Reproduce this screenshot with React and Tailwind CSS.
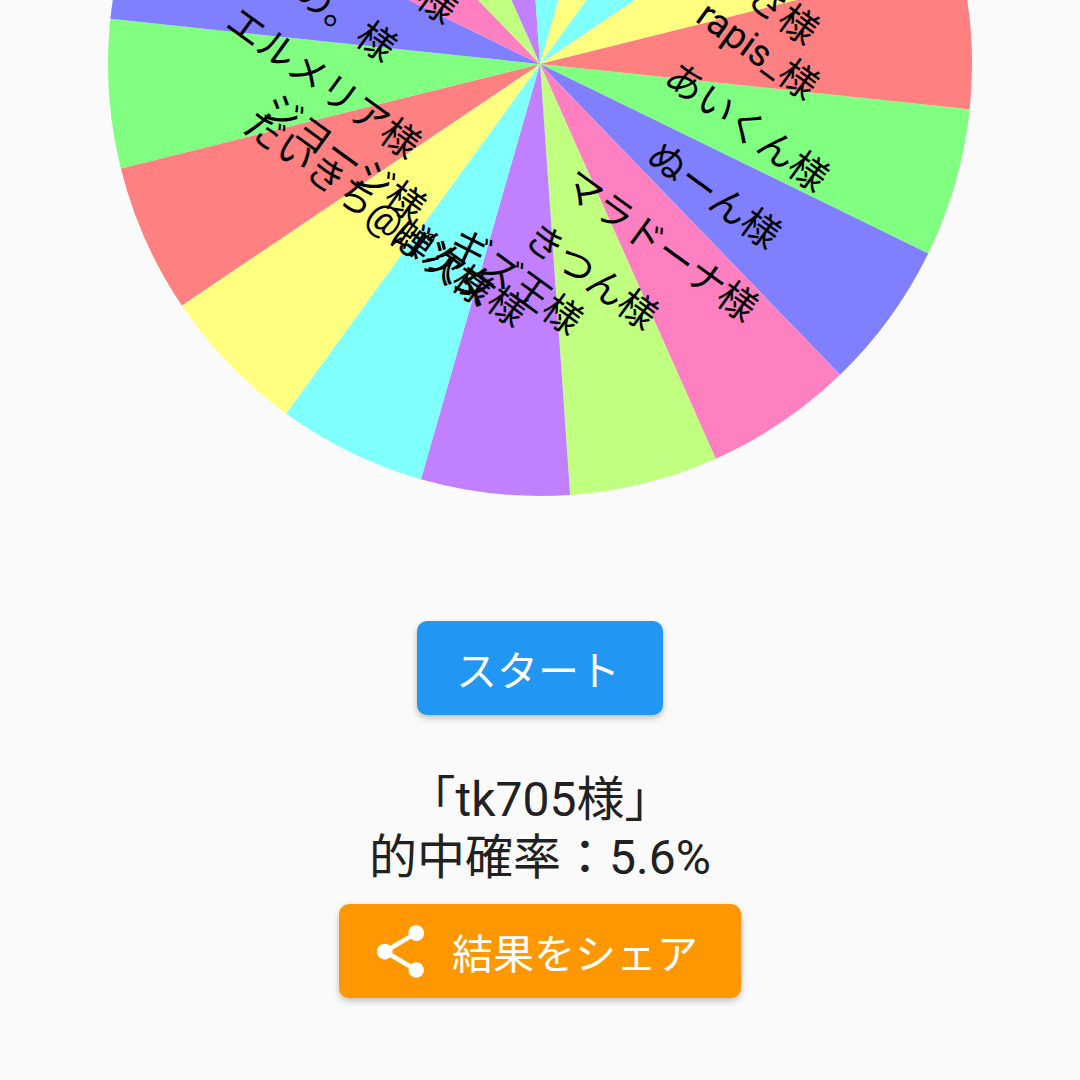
import React from 'react'
import { MdShare } from 'react-icons/md'

const CENTER_X = 540
const CENTER_Y = 64
const RADIUS = 432
const SWEEP = 20
const START_ANGLE = 6

const segmentColors = [
  '#80ff80', '#8080ff', '#ff80c0', '#c0ff80', '#c080ff', '#80ffff', '#ffff80', '#ff8080',
  '#80ff80', '#8080ff', '#ff80c0', '#c0ff80', '#c080ff', '#80ffff', '#ffff80', '#80ffff',
  '#ffff80', '#ff8080',
]

// x, y is the middle of the last glyph of each name
const names = [
  { text: 'あさ様', x: 798, y: 25 },
  { text: 'rapis_様', x: 798, y: 80 },
  { text: 'あいくん様', x: 808, y: 172 },
  { text: 'ぬーん様', x: 760, y: 229 },
  { text: 'マラドーナ様', x: 737, y: 302 },
  { text: 'きつん様', x: 637, y: 310 },
  { text: 'ギズ王様', x: 562, y: 315 },
  { text: 'ぱ次様', x: 472, y: 286 },
  { text: 'だいきち@蝉次女様', x: 507, y: 307 },
  { text: 'ジヨージ様', x: 405, y: 202 },
  { text: 'エルメリア様', x: 400, y: 139 },
  { text: 'ゆの。様', x: 376, y: 42 },
  { text: '様', x: 437, y: 4 },
]

const pointAt = (deg) => {
  const rad = (deg * Math.PI) / 180
  return [CENTER_X + RADIUS * Math.cos(rad), CENTER_Y + RADIUS * Math.sin(rad)]
}

const segmentPath = (index) => {
  const from = pointAt(START_ANGLE + index * SWEEP)
  const to = pointAt(START_ANGLE + (index + 1) * SWEEP)
  return `M${CENTER_X} ${CENTER_Y}L${from[0]} ${from[1]}A${RADIUS} ${RADIUS} 0 0 1 ${to[0]} ${to[1]}Z`
}

const Wheel = () => (
  <svg className="block" width="1080" height="497" viewBox="0 0 1080 497">
    {segmentColors.map((color, index) => (
      <path key={index} d={segmentPath(index)} fill={color} />
    ))}
    {names.map((name) => (
      <text
        key={name.text}
        transform={`translate(${name.x} ${name.y}) rotate(36)`}
        x="19"
        textAnchor="end"
        dominantBaseline="central"
        fontSize="38"
        fill="#000000"
      >
        {name.text}
      </text>
    ))}
  </svg>
)

const App = () => {
  return (
    <div className="min-h-screen w-full overflow-hidden bg-[#fafafa] flex flex-col items-center text-[#212121] font-['Roboto','Noto_Sans_CJK_JP',sans-serif]">
      <Wheel />

      <button className="mt-[124px] w-[246px] h-[94px] pt-[9px] pr-[4px] rounded-[10px] bg-[#2196f3] text-white text-[41px] shadow-[0_3px_6px_rgba(0,0,0,0.25)] flex items-center justify-center">
        スタート
      </button>

      <div className="mt-[56px] text-center text-[48px] leading-[58px]">
        <p>「tk705様」</p>
        <p>的中確率：5.6%</p>
      </div>

      <button className="mt-[17px] w-[402px] h-[94px] rounded-[10px] bg-[#ff9800] text-white text-[41px] shadow-[0_3px_6px_rgba(0,0,0,0.25)] flex items-center pl-[30px] gap-[20px]">
        <MdShare className="w-[63px] h-[63px] shrink-0" />
        <span className="pt-[10px]">結果をシェア</span>
      </button>
    </div>
  )
}

export default App
